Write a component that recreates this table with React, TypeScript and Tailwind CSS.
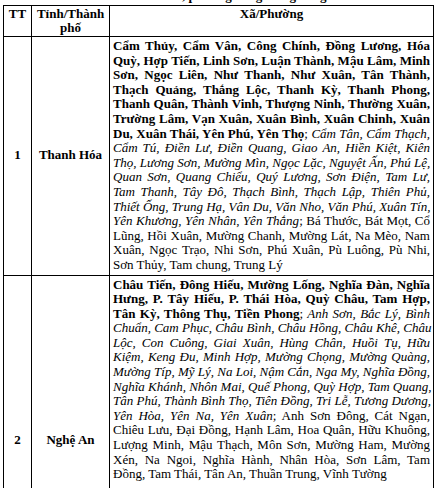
import React from "react";

type Seg = { t: string; s: "b" | "i" | "n" };
type Line = Seg[];

const B = (t: string): Seg => ({ t, s: "b" });
const I = (t: string): Seg => ({ t, s: "i" });
const N = (t: string): Seg => ({ t, s: "n" });

const row1: Line[] = [
  [B("Cẩm Thủy, Cẩm Vân, Công Chính, Đồng Lương, Hóa")],
  [B("Quỳ, Hợp Tiến, Linh Sơn, Luận Thành, Mậu Lâm, Minh")],
  [B("Sơn, Ngọc Liên, Như Thanh, Như Xuân, Tân Thành,")],
  [B("Thạch Quảng, Thắng Lộc, Thanh Kỳ, Thanh Phong,")],
  [B("Thanh Quân, Thành Vinh, Thượng Ninh, Thường Xuân,")],
  [B("Trường Lâm, Vạn Xuân, Xuân Bình, Xuân Chinh, Xuân")],
  [B("Du, Xuân Thái, Yên Phú, Yên Thọ"), N(";"), I(" Cẩm Tân, Cẩm Thạch,")],
  [I("Cẩm Tú, Điền Lư, Điền Quang, Giao An, Hiền Kiệt, Kiên")],
  [I("Thọ, Lương Sơn, Mường Mìn, Ngọc Lặc, Nguyệt Ấn, Phú Lệ,")],
  [I("Quan Sơn, Quang Chiểu, Quý Lương, Sơn Điện, Tam Lư,")],
  [I("Tam Thanh, Tây Đô, Thạch Bình, Thạch Lập, Thiên Phủ,")],
  [I("Thiết Ống, Trung Hạ, Vân Du, Văn Nho, Văn Phú, Xuân Tín,")],
  [I("Yên Khương, Yên Nhân, Yên Thắng"), N("; Bá Thước, Bát Mọt, Cổ")],
  [N("Lũng, Hồi Xuân, Mường Chanh, Mường Lát, Na Mèo, Nam")],
  [N("Xuân, Ngọc Trạo, Nhi Sơn, Phú Xuân, Pù Luông, Pù Nhi,")],
  [N("Sơn Thủy, Tam chung, Trung Lý")],
];

const row2: Line[] = [
  [B("Châu Tiến, Đông Hiếu, Mường Lống, Nghĩa Đàn, Nghĩa")],
  [B("Hưng, P. Tây Hiếu, P. Thái Hòa, Quỳ Châu, Tam Hợp,")],
  [B("Tân Kỳ, Thông Thụ, Tiền Phong"), N(";"), I(" Anh Sơn, Bắc Lý, Bình")],
  [I("Chuẩn, Cam Phục, Châu Bình, Châu Hồng, Châu Khê, Châu")],
  [I("Lộc, Con Cuông, Giai Xuân, Hùng Chân, Huồi Tụ, Hữu")],
  [I("Kiệm, Keng Đu, Minh Hợp, Mường Chọng, Mường Quàng,")],
  [I("Mường Típ, Mỹ Lý, Na Loi, Nậm Cắn, Nga My, Nghĩa Đồng,")],
  [I("Nghĩa Khánh, Nhôn Mai, Quế Phong, Quỳ Hợp, Tam Quang,")],
  [I("Tân Phú, Thành Bình Thọ, Tiên Đồng, Tri Lễ, Tương Dương,")],
  [I("Yên Hòa, Yên Na, Yên Xuân"), N("; Anh Sơn Đông, Cát Ngạn,")],
  [N("Chiêu Lưu, Đại Đồng, Hạnh Lâm, Hoa Quân, Hữu Khuông,")],
  [N("Lượng Minh, Mậu Thạch, Môn Sơn, Mường Ham, Mường")],
  [N("Xén, Na Ngoi, Nghĩa Hành, Nhân Hòa, Sơn Lâm, Tam")],
  [N("Đồng, Tam Thái, Tân An, Thuần Trung, Vĩnh Tường")],
];

function SegSpan({ seg }: { seg: Seg }) {
  if (seg.s === "b") return <span className="font-bold">{seg.t}</span>;
  if (seg.s === "i") return <span className="italic">{seg.t}</span>;
  return <span>{seg.t}</span>;
}

function Para({ lines }: { lines: Line[] }) {
  return (
    <div>
      {lines.map((line, idx) => (
        <div
          key={idx}
          className={
            idx < lines.length - 1
              ? "text-justify [text-align-last:justify] whitespace-nowrap"
              : "text-left whitespace-nowrap"
          }
        >
          {line.map((seg, j) => (
            <SegSpan key={j} seg={seg} />
          ))}
        </div>
      ))}
    </div>
  );
}

export default function App() {
  return (
    <div
      className="w-[434px] h-[488px] overflow-hidden bg-white text-black text-[13px] leading-[14.6px]"
      style={{ fontFamily: '"Liberation Serif", "Times New Roman", serif' }}
    >
      <div className="h-[5px] overflow-hidden flex flex-col justify-end items-center">
        <div className="font-bold whitespace-nowrap leading-[14px] mb-[2px]">
          Danh sách xã, phường vùng trồng rừng
        </div>
      </div>
      <table className="ml-[3px] w-[431px] table-fixed border-collapse">
        <colgroup>
          <col className="w-[28px]" />
          <col className="w-[78px]" />
          <col />
        </colgroup>
        <tbody>
          <tr className="h-[31px]">
            <td className="border border-black align-top text-center font-bold pt-[1px]">TT</td>
            <td className="border border-black align-top text-center font-bold pt-[1px] leading-[14px]">
              Tỉnh/Thành
              <br />
              phố
            </td>
            <td className="border border-black align-top text-center font-bold pt-[1px]">Xã/Phường</td>
          </tr>
          <tr>
            <td className="border border-black align-middle text-center font-bold">1</td>
            <td className="border border-black align-middle text-center font-bold">Thanh Hóa</td>
            <td className="border border-black align-top px-[3px] pt-[2px] pb-[2px]">
              <Para lines={row1} />
            </td>
          </tr>
          <tr>
            <td className="border border-black align-middle text-center font-bold">2</td>
            <td className="border border-black align-middle text-center font-bold">Nghệ An</td>
            <td className="border border-black align-top px-[3px] pt-[2px] pb-[2px] h-[330px]">
              <Para lines={row2} />
            </td>
          </tr>
        </tbody>
      </table>
    </div>
  );
}
